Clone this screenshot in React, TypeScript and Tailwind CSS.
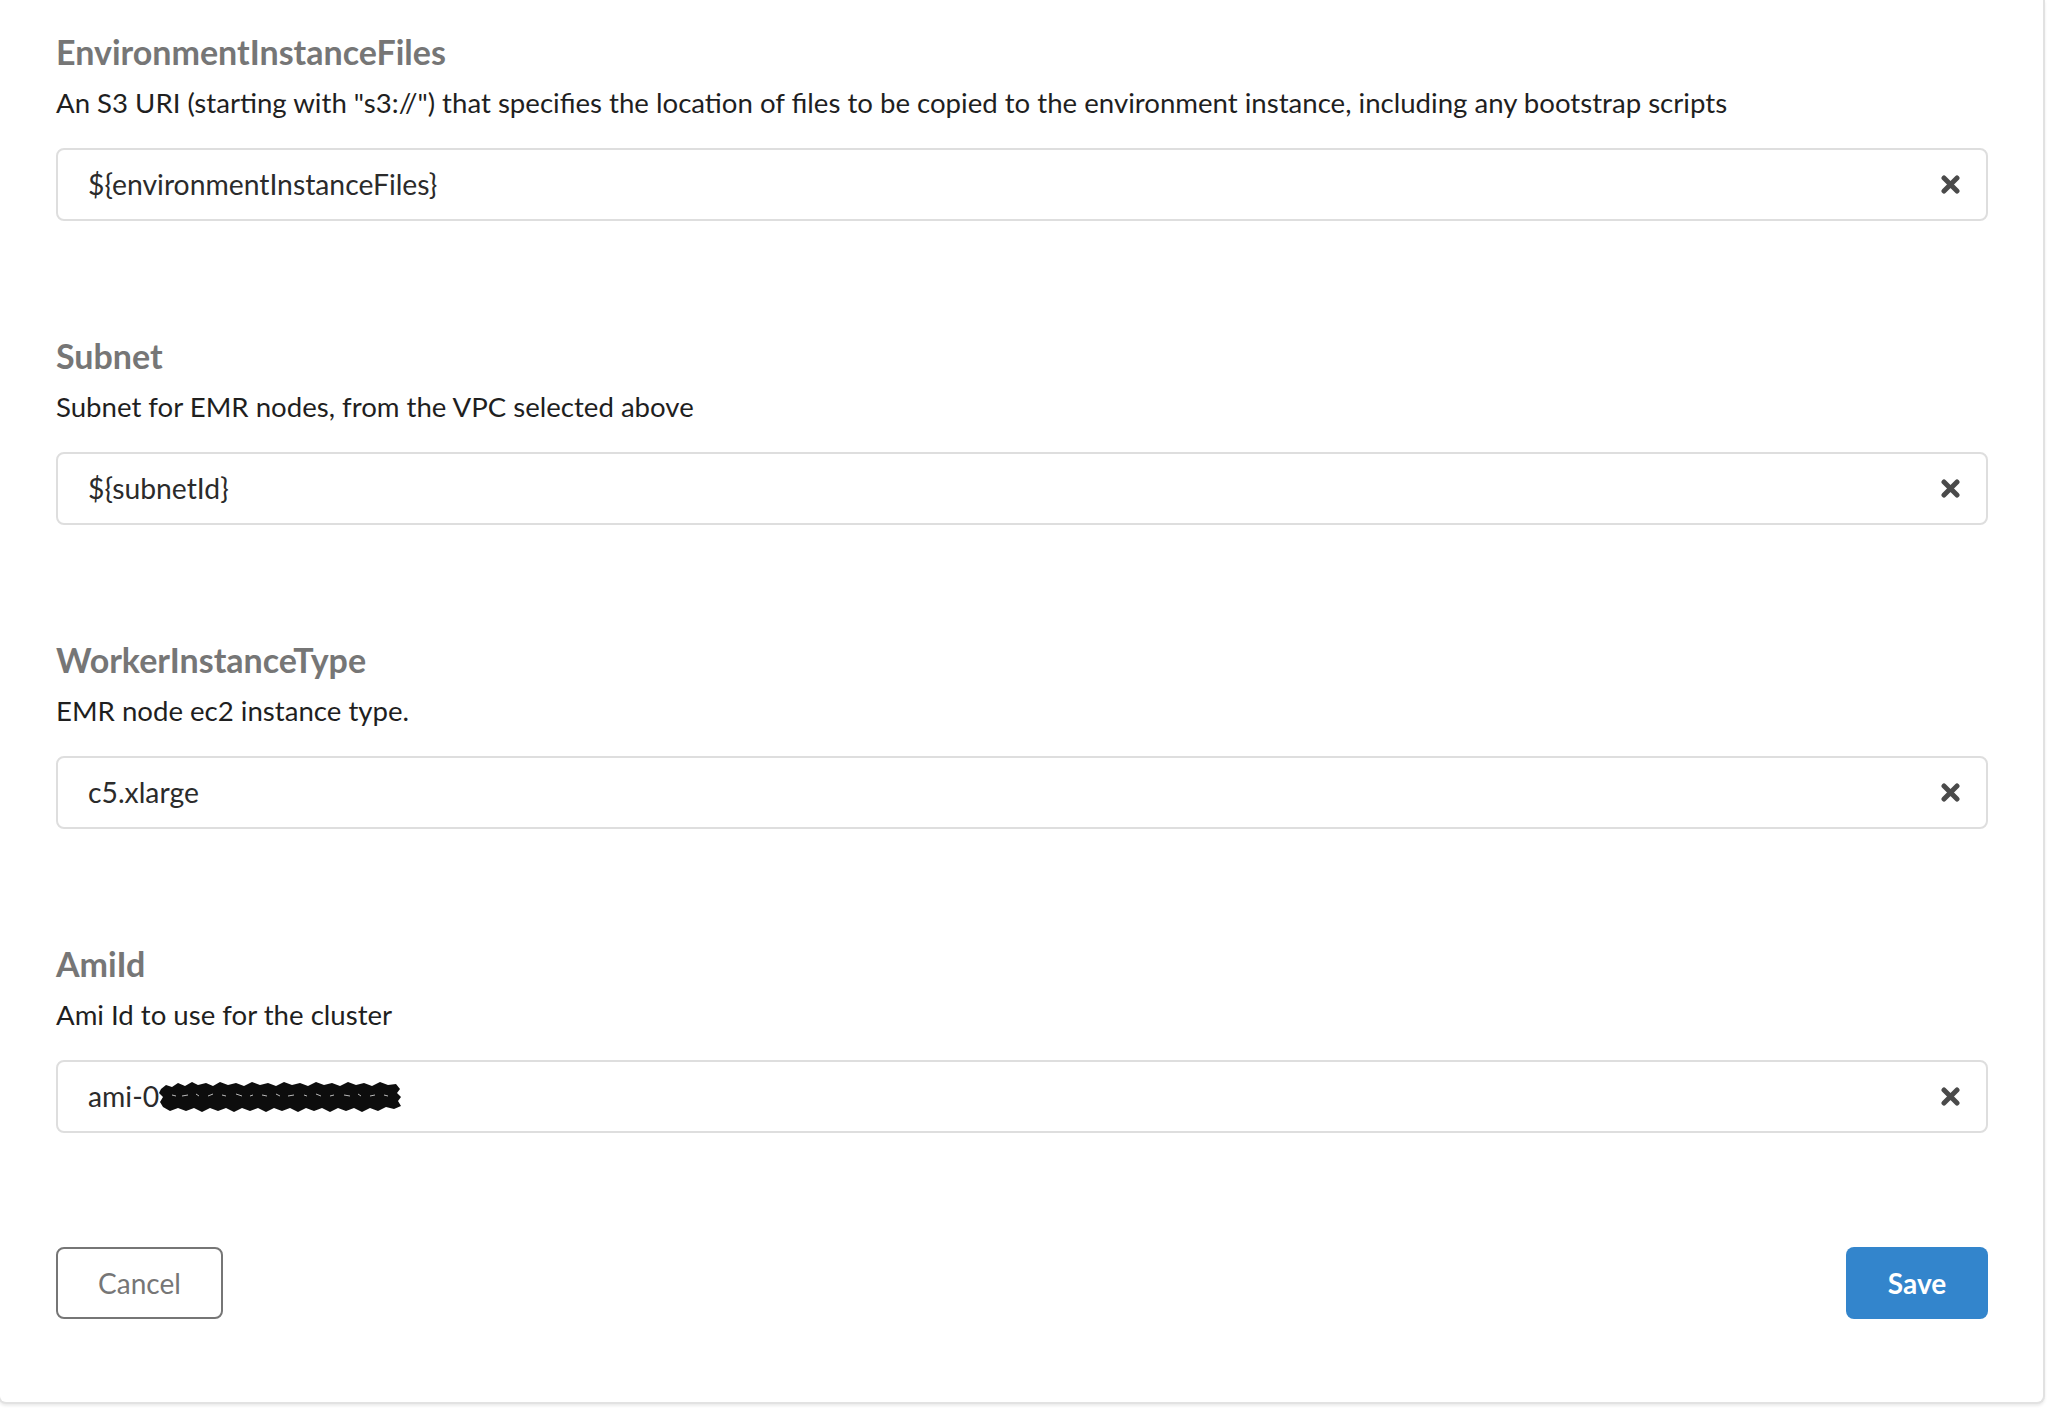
import React from 'react';

const fields = [
  {
    name: 'EnvironmentInstanceFiles',
    description:
      'An S3 URI (starting with "s3://") that specifies the location of files to be copied to the environment instance, including any bootstrap scripts',
    value: '${environmentInstanceFiles}',
  },
  {
    name: 'Subnet',
    description: 'Subnet for EMR nodes, from the VPC selected above',
    value: '${subnetId}',
  },
  {
    name: 'WorkerInstanceType',
    description: 'EMR node ec2 instance type.',
    value: 'c5.xlarge',
  },
  {
    name: 'AmiId',
    description: 'Ami Id to use for the cluster',
    value: 'ami-0',
    redacted: true,
  },
];

function ClearIcon() {
  return (
    <svg width="19" height="19" viewBox="0 0 19 19" className="shrink-0">
      <path d="M3 3 L16 16 M16 3 L3 16" stroke="#4a4a4a" strokeWidth="5" strokeLinecap="round" />
    </svg>
  );
}

// scribble used to hide the rest of the AMI id
function Redaction() {
  return (
    <svg width="244" height="34" viewBox="0 0 244 34" className="-ml-[1px]">
      <path
        d="M3 9 L8 5 L14 7 L20 3 L27 6 L34 2 L40 5 L48 3 L55 6 L62 2 L70 5 L78 3 L86 6 L94 2 L102 5 L110 3 L118 6 L126 2 L134 5 L142 3 L150 6 L158 2 L166 5 L174 3 L182 6 L190 2 L198 5 L206 3 L214 6 L222 2 L230 5 L238 4 L242 9 L239 13 L243 17 L240 21 L243 26 L236 29 L228 27 L220 31 L212 28 L204 32 L196 28 L188 31 L180 28 L172 32 L164 28 L156 31 L148 28 L140 32 L132 28 L124 31 L116 28 L108 32 L100 28 L92 31 L84 28 L76 32 L68 28 L60 31 L52 28 L44 32 L36 28 L28 31 L20 28 L12 31 L5 27 L2 22 L5 17 L1 13 Z"
        fill="#0d0d0d"
      />
      <path
        d="M14 15 l4 1 M24 16 l6 -1 M38 14 l3 2 M50 16 l5 -2 M64 15 l4 1 M78 14 l6 2 M92 16 l3 -1 M104 15 l5 1 M118 14 l4 2 M130 16 l6 -1 M146 15 l3 1 M158 14 l5 2 M172 16 l4 -1 M186 15 l6 1 M200 14 l3 2 M212 16 l5 -1 M226 15 l4 1"
        stroke="#bbb"
        strokeWidth="1"
      />
    </svg>
  );
}

function Field({ name, description, value, redacted }: (typeof fields)[number]) {
  return (
    <div className="flex flex-col">
      <h3 className="text-[34px] leading-[40px] font-bold text-[#767676]">{name}</h3>
      <p className="mt-[15px] text-[27.6px] leading-[32px] text-[#1f1f1f]">{description}</p>
      <div className="mt-[29px] h-[73px] flex items-center justify-between border-2 border-[#dedede] rounded-[8px] pl-[30px] pr-[26px]">
        <div className="flex items-center text-[28.3px] text-[#2b2b2b]">
          <span>{value}</span>
          {redacted && <Redaction />}
        </div>
        <ClearIcon />
      </div>
    </div>
  );
}

export default function App() {
  return (
    <div className="w-[2050px] h-[1410px] bg-white overflow-hidden" style={{ fontFamily: 'Lato, "Open Sans", sans-serif' }}>
      <div className="-ml-[2px] w-[2047px] h-[1404px] bg-white border-2 border-t-0 border-[#e2e2e2] rounded-b-[8px] shadow-[0_2px_3px_rgba(0,0,0,0.08)] pl-[56px] pr-[55px] pt-[32px] flex flex-col">
        <div className="flex flex-col gap-[115px]">
          {fields.map(f => (
            <Field key={f.name} {...f} />
          ))}
        </div>
        <div className="mt-[114px] flex items-center justify-between">
          <button className="w-[167px] h-[72px] border-2 border-[#767676] rounded-[8px] text-[28px] text-[#767676]">
            Cancel
          </button>
          <button className="w-[142px] h-[72px] rounded-[8px] bg-[#3385cc] text-white text-[28px] font-bold">
            Save
          </button>
        </div>
      </div>
    </div>
  );
}
